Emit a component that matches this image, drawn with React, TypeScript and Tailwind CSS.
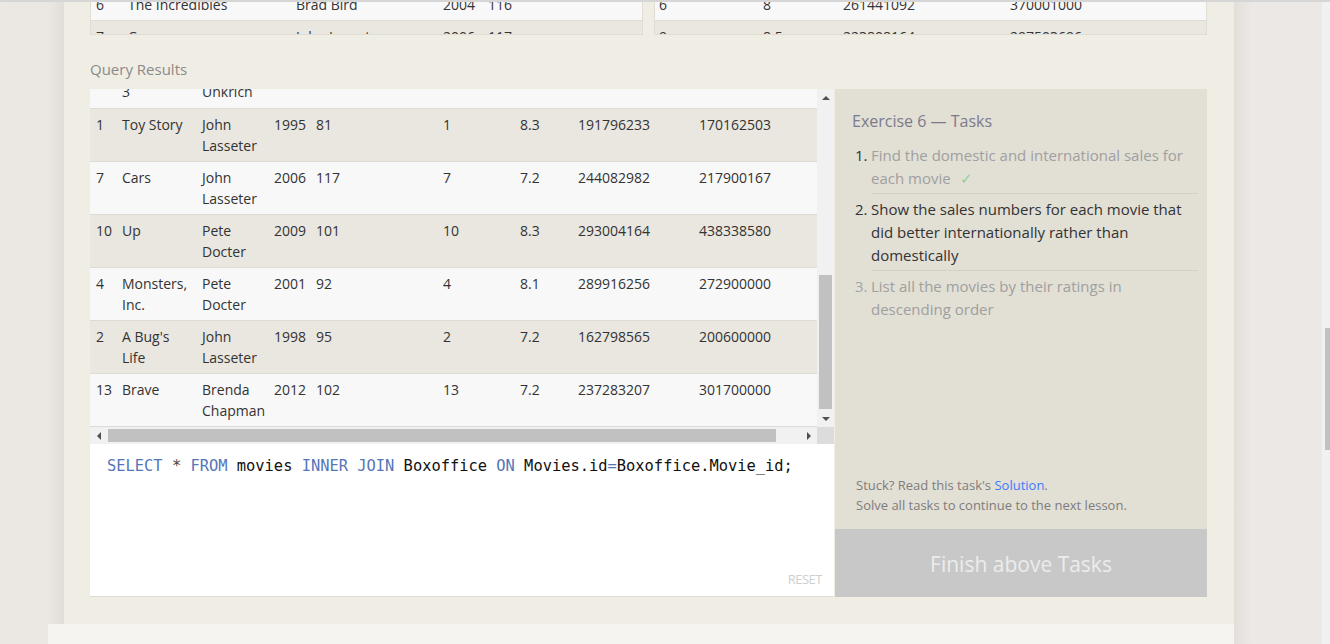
import React from 'react'

type Movie = {
  id: number
  title: string
  director: string
  year: number
  length: number
  movieId: number
  rating: number
  domestic: number
  international: number
}

const results: Movie[] = [
  { id: 3, title: 'Toy Story 3', director: 'Lee Unkrich', year: 2010, length: 103, movieId: 3, rating: 8.4, domestic: 415004880, international: 648167031 },
  { id: 1, title: 'Toy Story', director: 'John Lasseter', year: 1995, length: 81, movieId: 1, rating: 8.3, domestic: 191796233, international: 170162503 },
  { id: 7, title: 'Cars', director: 'John Lasseter', year: 2006, length: 117, movieId: 7, rating: 7.2, domestic: 244082982, international: 217900167 },
  { id: 10, title: 'Up', director: 'Pete Docter', year: 2009, length: 101, movieId: 10, rating: 8.3, domestic: 293004164, international: 438338580 },
  { id: 4, title: 'Monsters, Inc.', director: 'Pete Docter', year: 2001, length: 92, movieId: 4, rating: 8.1, domestic: 289916256, international: 272900000 },
  { id: 2, title: "A Bug's Life", director: 'John Lasseter', year: 1998, length: 95, movieId: 2, rating: 7.2, domestic: 162798565, international: 200600000 },
  { id: 13, title: 'Brave', director: 'Brenda Chapman', year: 2012, length: 102, movieId: 13, rating: 7.2, domestic: 237283207, international: 301700000 },
]

const tasks = [
  { text: 'Find the domestic and international sales for each movie', state: 'done' },
  { text: 'Show the sales numbers for each movie that did better internationally rather than domestically', state: 'active' },
  { text: 'List all the movies by their ratings in descending order', state: 'todo' },
]

const Arrow = ({ dir }: { dir: 'up' | 'down' | 'left' | 'right' }) => {
  const pts = {
    up: '0,5 8,5 4,1',
    down: '0,1 8,1 4,5',
    left: '5,0 5,8 1,4',
    right: '1,0 1,8 5,4',
  }[dir]
  const vertical = dir === 'up' || dir === 'down'
  return (
    <svg width={vertical ? 8 : 6} height={vertical ? 6 : 8} viewBox={vertical ? '0 0 8 6' : '0 0 6 8'}>
      <polygon points={pts} fill="#505050" />
    </svg>
  )
}

const App = () => {
  return (
    <div className="flex h-[644px] w-[1330px] overflow-hidden border-t-2 border-[#d6d6d6] bg-[#ece8e4] font-['Open_Sans',sans-serif] text-[#333]">
      {/* left gutter */}
      <div className="flex w-[64px] flex-col">
        <div className="flex-1 bg-gradient-to-r from-[#ebe7e3] from-75% to-[#e1ddd9]" />
        <div className="flex h-[20px]">
          <div className="w-[48px] bg-[#ebe7e3]" />
          <div className="flex-1 bg-[#f5f4f0]" />
        </div>
      </div>

      {/* lesson column */}
      <div className="flex w-[1170px] flex-col">
        <div className="flex flex-1 flex-col bg-[#f0ede5] px-[26px]">
          {/* scrolled tables above */}
          <div className="flex h-[33px] gap-[11px] overflow-hidden">
            <div className="w-[553px] overflow-hidden border-x border-b border-[#e0ddd5]">
              <div className="-mt-[13px] text-[14px] leading-[21px]">
                <div className="flex h-[32px] items-start border-b border-[#dddbd3] bg-[#f8f8f8] pt-[5px]">
                  <span className="w-[32px] pl-[5px]">6</span>
                  <span className="w-[168px] pl-[5px]">The Incredibles</span>
                  <span className="w-[147px] pl-[5px]">Brad Bird</span>
                  <span className="w-[45px] pl-[5px]">2004</span>
                  <span className="pl-[5px]">116</span>
                </div>
                <div className="flex h-[32px] items-start bg-[#e9e7e0] pt-[5px]">
                  <span className="w-[32px] pl-[5px]">7</span>
                  <span className="w-[168px] pl-[5px]">Cars</span>
                  <span className="w-[147px] pl-[5px]">John Lasseter</span>
                  <span className="w-[45px] pl-[5px]">2006</span>
                  <span className="pl-[5px]">117</span>
                </div>
              </div>
            </div>
            <div className="w-[553px] overflow-hidden border-x border-b border-[#e0ddd5]">
              <div className="-mt-[13px] text-[14px] leading-[21px]">
                <div className="flex h-[32px] items-start border-b border-[#dddbd3] bg-[#f8f8f8] pt-[5px]">
                  <span className="w-[103px] pl-[4px]">6</span>
                  <span className="w-[80px] pl-[5px]">8</span>
                  <span className="w-[167px] pl-[5px]">261441092</span>
                  <span className="pl-[5px]">370001000</span>
                </div>
                <div className="flex h-[32px] items-start bg-[#e9e7e0] pt-[5px]">
                  <span className="w-[103px] pl-[4px]">9</span>
                  <span className="w-[80px] pl-[5px]">8.5</span>
                  <span className="w-[167px] pl-[5px]">223808164</span>
                  <span className="pl-[5px]">297503696</span>
                </div>
              </div>
            </div>
          </div>

          <h3 className="mt-[23px] mb-[9px] text-[15px] leading-[22px] text-[#8a8a8a]">Query Results</h3>

          <div className="flex h-[508px]">
            {/* results + editor */}
            <div className="flex w-[744px] flex-col">
              <div className="flex h-[338px]">
                <div className="w-[727px] overflow-hidden bg-[#f8f8f8]">
                  <table className="-mt-[34px] w-[754px] table-fixed border-collapse text-[14px] leading-[21px]">
                    <colgroup>
                      <col className="w-[26px]" />
                      <col className="w-[80px]" />
                      <col className="w-[72px]" />
                      <col className="w-[42px]" />
                      <col className="w-[127px]" />
                      <col className="w-[77px]" />
                      <col className="w-[58px]" />
                      <col className="w-[121px]" />
                      <col className="w-[151px]" />
                    </colgroup>
                    <tbody>
                      {results.map((m, i) => (
                        <tr key={m.id} className={`h-[53px] border-b border-[#dddbd3] align-top ${i % 2 === 0 ? 'bg-[#f8f8f8]' : 'bg-[#e9e7e0]'}`}>
                          <td className="pt-[5px] pl-[6px]">{m.id}</td>
                          <td className="pt-[5px] pr-[8px] pl-[6px]">{m.title}</td>
                          <td className="pt-[5px] pr-[4px] pl-[6px]">{m.director}</td>
                          <td className="pt-[5px] pl-[6px]">{m.year}</td>
                          <td className="pt-[5px] pl-[6px]">{m.length}</td>
                          <td className="pt-[5px] pl-[6px]">{m.movieId}</td>
                          <td className="pt-[5px] pl-[6px]">{m.rating}</td>
                          <td className="pt-[5px] pl-[6px]">{m.domestic}</td>
                          <td className="pt-[5px] pl-[6px]">{m.international}</td>
                        </tr>
                      ))}
                    </tbody>
                  </table>
                </div>
                {/* vertical scrollbar */}
                <div className="flex w-[17px] flex-col bg-[#f1f1f1]">
                  <div className="flex h-[17px] items-center justify-center"><Arrow dir="up" /></div>
                  <div className="flex flex-1 flex-col px-[2px] pt-[169px] pb-[1px]">
                    <div className="flex-1 bg-[#c1c1c1]" />
                  </div>
                  <div className="flex h-[17px] items-center justify-center"><Arrow dir="down" /></div>
                </div>
              </div>
              {/* horizontal scrollbar */}
              <div className="flex h-[17px] bg-[#f1f1f1]">
                <div className="flex w-[17px] items-center justify-center"><Arrow dir="left" /></div>
                <div className="flex flex-1 items-center pr-[24px] pl-[1px]">
                  <div className="h-[13px] flex-1 bg-[#c1c1c1]" />
                </div>
                <div className="flex w-[17px] items-center justify-center"><Arrow dir="right" /></div>
                <div className="w-[17px] bg-[#dcdcdc]" />
              </div>

              {/* editor */}
              <div className="relative flex-1 border-b border-[#dedbd3] bg-white pt-[10px] pl-[17px] font-['DejaVu_Sans_Mono',monospace] text-[15.4px] leading-[24px] text-[#111]">
                <span className="text-[#5576b8]">SELECT</span> <span className="text-[#444]">*</span>{' '}
                <span className="text-[#5576b8]">FROM</span> movies <span className="text-[#5576b8]">INNER JOIN</span> Boxoffice{' '}
                <span className="text-[#5576b8]">ON</span> Movies.id<span className="text-[#5576b8]">=</span>Boxoffice.Movie_id;
                <span className="absolute right-[12px] bottom-[8px] font-['Open_Sans',sans-serif] text-[13px] leading-[18px] tracking-[-0.5px] text-[#cfcfcf]">
                  RESET
                </span>
              </div>
            </div>

            {/* tasks panel */}
            <div className="ml-px flex w-[372px] flex-col bg-[#e2dfd5]">
              <div className="flex-1 pt-[20px] pr-[9px] pl-[17px]">
                <h4 className="text-[16px] leading-[24px] text-[#7b7b8c]">Exercise 6 — Tasks</h4>
                <ol className="mt-[11px] text-[15px] leading-[23px]">
                  {tasks.map((t, i) => (
                    <li key={i} className="flex items-start">
                      <span className={`w-[19px] shrink-0 pl-[3px] ${i > 0 ? 'pt-[5px]' : ''} ${t.state === 'todo' ? 'text-[#a5a5a5]' : 'text-[#333]'}`}>{i + 1}.</span>
                      <div className={`flex-1 pb-[3px] ${i > 0 ? 'border-t border-[#d4d1c7] pt-[4px]' : ''} ${t.state === 'active' ? 'text-[#333]' : 'text-[#a0a0a0]'}`}>
                        {t.text}
                        {t.state === 'done' && <span className="ml-[9px] text-[#90cf9c]">✓</span>}
                      </div>
                    </li>
                  ))}
                </ol>
              </div>
              <div className="pb-[14px] pl-[21px] text-[13px] leading-[20px] text-[#7d7d7d]">
                <p>
                  Stuck? Read this task's <span className="text-[#3a7bff]">Solution</span>.
                </p>
                <p>Solve all tasks to continue to the next lesson.</p>
              </div>
              <div className="flex h-[68px] items-center justify-center bg-[#c8c8c8] pt-[3px] text-[21px] text-[#ececec]">
                Finish above Tasks
              </div>
            </div>
          </div>
          <div className="h-[26px]" />
        </div>
        <div className="h-[20px] bg-[#f5f4f0]" />
      </div>

      {/* right gutter */}
      <div className="w-[88px] bg-gradient-to-r from-[#e2dfdb] to-[#ece8e5] to-20%" />

      {/* page scrollbar */}
      <div className="flex w-[8px] flex-col bg-[#f1f1f1]">
        <div className="h-[326px]" />
        <div className="ml-[3px] h-[122px] bg-[#c1c1c1]" />
      </div>
    </div>
  )
}

export default App
